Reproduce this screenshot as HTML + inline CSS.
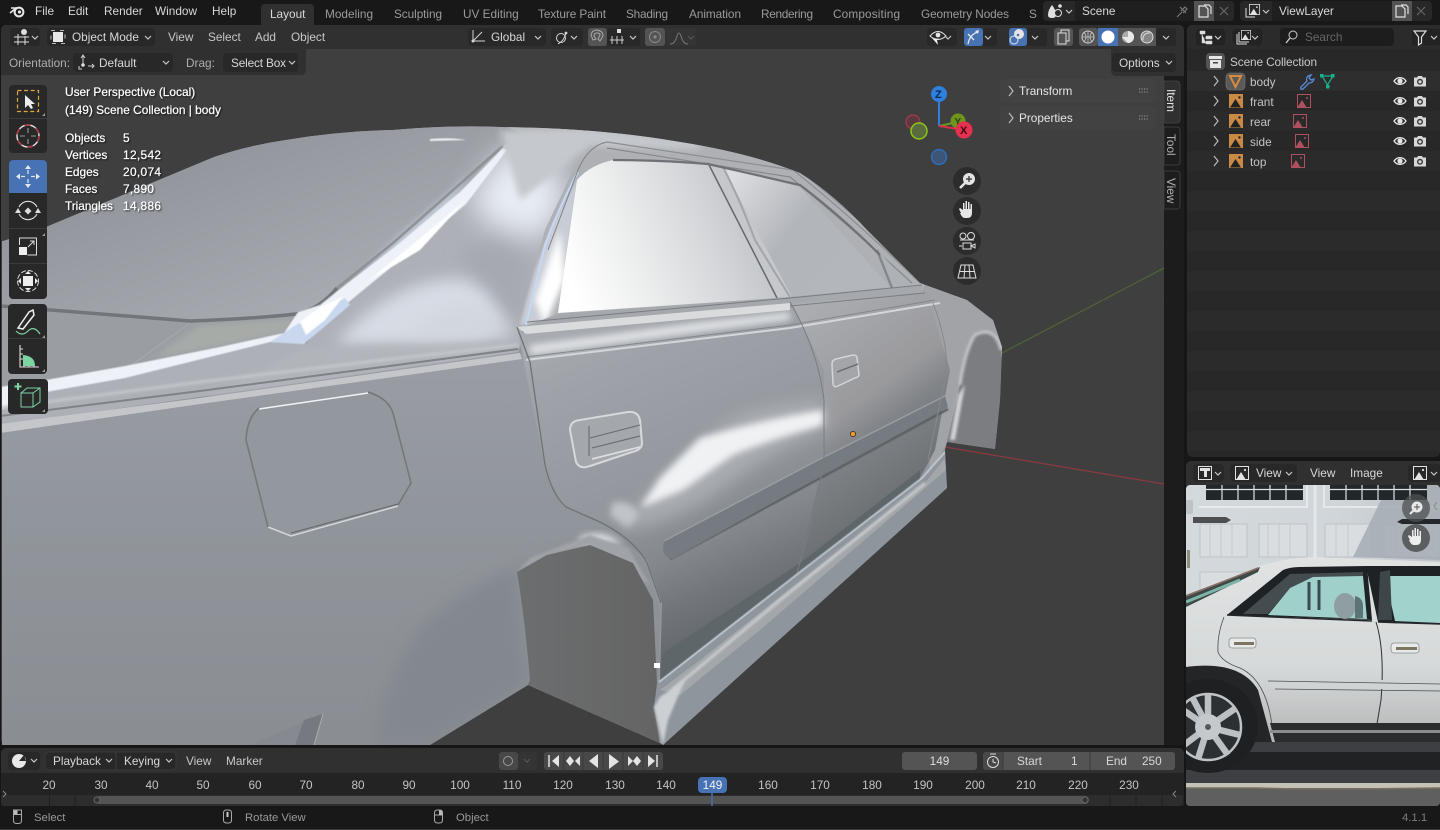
<!DOCTYPE html>
<html><head><meta charset="utf-8"><title>Blender</title>
<style>
html,body{margin:0;padding:0;background:#161616;width:1440px;height:830px;overflow:hidden}
svg{display:block;position:absolute;left:0;top:0}
text{font-family:"Liberation Sans",sans-serif;font-size:11.8px;fill:#c8c8c8}
.m{fill:#d8d8d8}
.w{fill:#9b9b9b}
.s{fill:#9a9a9a;font-size:11.3px}
.o{fill:#fff;stroke:#fff;stroke-width:.22px;font-size:11.9px;filter:drop-shadow(1px 1px .8px rgba(0,0,0,.65))}
.n{fill:#c4c4c4;text-anchor:middle;font-size:11.8px}
.ch{fill:none;stroke:#c8c8c8;stroke-width:1.2}
.seam{fill:none;stroke:#6f7277;stroke-width:1.3}
</style></head><body>
<svg width="1440" height="830" viewBox="0 0 1440 830" xmlns="http://www.w3.org/2000/svg">
<defs>
<filter id="b05" x="-20%" y="-20%" width="140%" height="140%"><feGaussianBlur stdDeviation=".6"/></filter>
<filter id="b1" x="-30%" y="-30%" width="160%" height="160%"><feGaussianBlur stdDeviation="1.2"/></filter>
<filter id="b3" x="-30%" y="-30%" width="160%" height="160%"><feGaussianBlur stdDeviation="3.500"/></filter>
<filter id="b8" x="-40%" y="-40%" width="180%" height="180%"><feGaussianBlur stdDeviation="8"/></filter>
<filter id="b16" x="-60%" y="-60%" width="220%" height="220%"><feGaussianBlur stdDeviation="14"/></filter>
<clipPath id="vp"><rect x="2" y="25" width="1162" height="720"/></clipPath>
<clipPath id="ph"><rect x="1186" y="485" width="254" height="321" rx="4"/></clipPath>
<clipPath id="car"><path d="M0 242L46 227L214 157Q250 145 286 140Q340 131 393 130Q450 125 500 127Q600 128 680 142Q750 153 800 173Q835 195 867 230L920 283L967 300L993 320L1002 347L1000 400L995 449L947 442L945 450L947 488L663 745L660 743L528 685L430 745H0Z"/></clipPath>
<linearGradient id="gup" x1="0" y1="0" x2="1" y2="1"><stop offset="0" stop-color="#878b93"/><stop offset=".5" stop-color="#9c9fa5"/><stop offset="1" stop-color="#b0b3b9"/></linearGradient>
<linearGradient id="glow" x1="0" y1="0" x2="0" y2="1"><stop offset="0" stop-color="#9a9da4"/><stop offset=".4" stop-color="#91969c"/><stop offset="1" stop-color="#8a8d92"/></linearGradient>
<linearGradient id="gd1" x1="0" y1="0" x2=".35" y2="1"><stop offset="0" stop-color="#aeb1b6"/><stop offset=".25" stop-color="#9fa3a9"/><stop offset=".6" stop-color="#93979d"/><stop offset=".76" stop-color="#84888d"/><stop offset=".88" stop-color="#72767b"/><stop offset="1" stop-color="#63686b"/></linearGradient>
<linearGradient id="gd2" x1="0" y1="0" x2=".4" y2="1"><stop offset="0" stop-color="#b0b2b6"/><stop offset=".5" stop-color="#99999c"/><stop offset=".62" stop-color="#808387"/><stop offset="1" stop-color="#62676a"/></linearGradient>
<linearGradient id="gw1" gradientUnits="userSpaceOnUse" x1="575" y1="295" x2="765" y2="225"><stop offset="0" stop-color="#ffffff"/><stop offset=".35" stop-color="#eceded"/><stop offset=".7" stop-color="#d5d7da"/><stop offset="1" stop-color="#bfc2c6"/></linearGradient>
<linearGradient id="gw2" gradientUnits="userSpaceOnUse" x1="735" y1="175" x2="860" y2="270"><stop offset="0" stop-color="#dcdde0"/><stop offset=".5" stop-color="#b2b5ba"/><stop offset="1" stop-color="#b3b6ba"/></linearGradient>
<linearGradient id="gar" x1="0" y1="0" x2="1" y2="0"><stop offset="0" stop-color="#6d6e6f"/><stop offset="1" stop-color="#646464"/></linearGradient>
<linearGradient id="gga" x1="0" y1="0" x2="1" y2="0"><stop offset="0" stop-color="#d4d9dc"/><stop offset=".6" stop-color="#d0d5d9"/><stop offset="1" stop-color="#c0c6cb"/></linearGradient>
<linearGradient id="gcar" x1="0" y1="0" x2="0" y2="1"><stop offset="0" stop-color="#e1e3e3"/><stop offset=".6" stop-color="#d6d9d9"/><stop offset="1" stop-color="#b4b6b6"/></linearGradient>
<symbol id="eye" viewBox="0 0 14 12" overflow="visible"><path d="M1 6C4 1.500 10 1.500 13 6C10 10.500 4 10.500 1 6Z" fill="none" stroke="#e4e4e4" stroke-width="1.300"/><circle cx="7" cy="6" r="2.600" fill="#e4e4e4"/></symbol>
<symbol id="cam" viewBox="0 0 14 12" overflow="visible"><path d="M1 2.500H4L5 1H9L10 2.500H13V11.500H1Z" fill="#d8d8d8"/><circle cx="7" cy="6.800" r="3" fill="#3a3a3a"/><circle cx="7" cy="6.800" r="1.600" fill="#d8d8d8"/></symbol>
<symbol id="img" viewBox="0 0 14 14" overflow="visible"><rect x="0" y="0" width="14" height="14" fill="#c98a45"/><path d="M1 13.500L6.500 5L12 13.500Z" fill="#222"/><circle cx="10.500" cy="3.500" r="1.200" fill="#222"/></symbol>
<symbol id="imgr" viewBox="0 0 14 14" overflow="visible"><rect x=".5" y=".5" width="13" height="13" fill="none" stroke="#b0505e"/><path d="M0 14L5 6L10 14Z" fill="#b0505e"/><circle cx="10" cy="4" r="1" fill="#b0505e"/></symbol>
<symbol id="imgw" viewBox="0 0 14 14" overflow="visible"><rect x=".5" y=".5" width="13" height="13" fill="none" stroke="#e2e2e2"/><path d="M1 14L6 6L11 14Z" fill="#e2e2e2"/><circle cx="10" cy="4" r="1.100" fill="#e2e2e2"/></symbol>
</defs>

<rect width="1440" height="830" fill="#161616"/>
<rect x="0" y="0" width="1440" height="25" fill="#181818"/>
<rect x="1" y="25" width="1183" height="720" rx="5" fill="#3f3f3f"/>

<!-- 3D scene -->
<g clip-path="url(#vp)">
<path d="M1002 353L1164 268" stroke="#4e6733" stroke-width="1.200"/>
<path d="M945 447L1164 484" stroke="#8c3a40" stroke-width="1.200"/>
<path d="M1000 300H1164M1000 245H1164M1000 200H1164" stroke="#434343" stroke-width="1" opacity=".6"/>

<g clip-path="url(#car)">
<rect x="0" y="120" width="1010" height="630" fill="#92969c"/>

<!-- upper panel -->
<path d="M0 240L46 225L214 155L286 138L393 128L503 125V143L393 243L337 288Q320 308 296 313Q250 318 190 320L0 306Z" fill="url(#gup)"/>
<path d="M430 139Q450 137 466 140L430 141Z" fill="#eef0f3" filter="url(#b05)"/>
<path d="M350 285L395 240L470 175L440 225L380 270L330 300Z" fill="#c2cad8" filter="url(#b3)"/>
<path d="M0 306L190 320Q250 318 296 313L286 333L125 370L0 392Z" fill="#9a9da2"/>
<path d="M200 325L296 318L286 333L150 360Z" fill="#a7aba8" filter="url(#b3)"/>

<!-- mid zone -->
<path d="M0 392L125 372L286 336L306 344L343 300L464 205L503 146L528 128L580 160L525 330L518 352L0 425Z" fill="#adb0b7"/>
<path d="M470 200L505 150L545 150L565 200L540 240L490 225Z" fill="#e8ecf4" filter="url(#b16)"/>
<path d="M460 250Q500 232 530 265L520 320L480 300Z" fill="#a6a9b1" filter="url(#b8)"/>
<path d="M335 345Q380 290 440 280Q490 270 505 330L480 345Z" fill="#dfe4ed" filter="url(#b8)" opacity=".85"/>
<path d="M400 340Q450 295 490 310L520 335L440 350Z" fill="#d0d4dc" filter="url(#b8)" opacity=".7"/>
<path d="M306 348L500 340L518 350L200 398Z" fill="#b3b6bc" filter="url(#b3)" opacity=".8"/>

<path d="M0 306L190 321Q250 319 296 314Q320 309 337 288" fill="none" stroke="#72757a" stroke-width="3.500"/>
<path d="M337 288L393 243L503 146" fill="none" stroke="#8f9296" stroke-width="2.500"/>
<path d="M125 370L190 323" fill="none" stroke="#a8abae" stroke-width="1"/>

<!-- white reflection -->
<g filter="url(#b05)">
<path d="M0 387L46 380L125 366L220 347L284 333L298 312L320 305L345 285L396 246L460 192L503 148L507 150L466 204L400 260L345 305L304 344L270 342L125 378L46 392L0 410Z" fill="#eef2f8"/>
<path d="M296 325L345 298L350 305L304 344L270 342Z" fill="#c9d8ef"/>
<path d="M300 322L322 306L343 297L325 320L306 335Z" fill="#ffffff"/>
<path d="M345 300L400 255L466 200L420 250L370 280Z" fill="#ffffff"/>
</g>

<!-- lower body -->
<path d="M0 428L518 352L530 360L548 470L566 508L600 522L645 560L660 610L658 690L660 745L528 685L430 745H0Z" fill="url(#glow)"/>
<path d="M0 424L200 398L520 353L522 359L200 404L0 433Z" fill="#c4c6ca"/>
<path d="M0 416L200 391L518 349" fill="none" stroke="#7f8287" stroke-width="2"/>
<path d="M0 408L200 382L400 358L518 345" fill="none" stroke="#c3c6cb" stroke-width="3" filter="url(#b1)"/>
<path d="M375 745Q390 660 428 620Q480 575 553 555L517 572L528 685L430 745Z" fill="#83888f" filter="url(#b8)"/>
<path d="M250 745L323 714L314 745Z" fill="#868a90"/>
<path d="M304 720L323 714L314 745H295Z" fill="#767a80"/>
<path d="M323 714L314 745" stroke="#a9acb0" stroke-width="1"/>

<!-- fuel door -->
<path d="M259 408L368 392Q388 398 393 413L411 483L398 505L291 535L268 527L246 440Q247 418 259 408Z" fill="#93989e"/>
<path d="M259 409L368 393" fill="none" stroke="#f0f3f7" stroke-width="1.600"/>
<path d="M368 392Q388 398 393 413L411 483L398 505" fill="none" stroke="#73767a" stroke-width="1.500"/>
<path d="M398 506L291 536L268 527" fill="none" stroke="#d4d7da" stroke-width="1.500"/>
<path d="M398 504L291 533" fill="none" stroke="#64676b" stroke-width="1"/>
<path d="M268 527L246 440Q247 418 259 408" fill="none" stroke="#75787c" stroke-width="1.600"/>

<!-- fender + inner arch -->
<path d="M920 283L967 300L993 320L1005 350L1000 360Q995 325 975 335Q965 350 960 385L947 442L930 475L925 300Z" fill="#a1a3a7"/>
<path d="M975 335Q995 325 1001 350L1002 400L995 452L947 442L960 385Q965 350 975 335Z" fill="#7c7d80"/>
<path d="M960 385Q965 350 975 335Q995 325 1001 350" fill="none" stroke="#c4c6c9" stroke-width="3" filter="url(#b1)"/>
<path d="M950 440L958 395L965 385L955 440Z" fill="#d0d2d5" filter="url(#b1)"/>

<!-- doors -->
<path d="M517 327L790 300L824 370L824 460L797 573L660 680L662 603L647 560L600 522L563 507L545 470Z" fill="url(#gd1)"/>
<path d="M790 300L925 285L950 370L935 450L920 478L800 565L797 573L824 460L824 370Z" fill="url(#gd2)"/>
<path d="M663 653L800 563L920 470L920 480L660 682Z" fill="#5f666a"/>

<!-- roof / pillar -->
<path d="M503 125L600 126L750 150L800 171L867 228L925 283L922 292L517 330L545 230L578 160Z" fill="#aeb0b4"/>
<path d="M500 130L590 128L700 142L700 150L590 146L560 170L520 200Z" fill="#c5c8cc" filter="url(#b3)"/>
<path d="M520 325L535 270L552 225L578 178L565 270L545 320Z" fill="#c8ccd4" filter="url(#b1)"/>
<path d="M535 300L560 230L565 280L545 325Z" fill="#ffffff" filter="url(#b3)"/>
<path d="M578 172Q560 205 545 245L526 325" fill="none" stroke="#c5d9f7" stroke-width="2"/>
<path d="M607 142Q588 146 578 170L548 250" fill="none" stroke="#7f8288" stroke-width="1"/>
<path d="M607 142L793 170Q850 215 920 283" fill="none" stroke="#8b8e92" stroke-width="1.200"/>
<path d="M607 148L790 177Q845 222 912 283" fill="none" stroke="#85888c" stroke-width="1.200"/>

<!-- windows -->
<path d="M613 160L708 163L777 298L558 313L577 180Q590 165 613 160Z" fill="url(#gw1)"/>
<path d="M723 167L800 187L890 287L792 297Z" fill="url(#gw2)"/>
<path d="M708 163L723 167L792 297L777 298Z" fill="#c5c7ca"/>
<path d="M708 163L777 298" stroke="#65686d" stroke-width="1.500"/>
<path d="M723 167Q740 200 755 240L790 297" fill="none" stroke="#a2a5a9" stroke-width="2"/>
<path d="M877 250L912 287L892 288Z" fill="#aeb1b5"/>
<path d="M877 250L892 288" stroke="#85888c" stroke-width="2.500"/>
<path d="M613 160Q660 160 708 164L800 185Q840 215 880 255" fill="none" stroke="#6e7175" stroke-width="2.200"/>

<!-- beltline -->
<path d="M558 314L777 298L890 288L922 285L922 292L790 304L520 328Z" fill="#a5a8ac"/>
<path d="M527 322L790 298L922 285M522 332L790 306L925 293" fill="none" stroke="#7a7d82" stroke-width="1"/>
<path d="M517 327L790 303L790 310L526 334Z" fill="#dadbdd"/>
<path d="M530 345L700 322L790 312L790 320L530 355Z" fill="#dfe1e4" filter="url(#b3)"/>
<path d="M526 360L790 328L940 303" fill="none" stroke="#d4d6d9" stroke-width="2"/>
<path d="M526 357L790 325L935 300" fill="none" stroke="#84878b" stroke-width="1"/>

<!-- door highlights -->
<path d="M620 530Q680 450 740 415Q790 400 825 400V430Q770 450 720 490Q670 525 620 530Z" fill="#b3b6ba" filter="url(#b8)" opacity=".7"/>
<path d="M640 508L660 478L700 438Q760 420 823 410L823 425Q770 440 733 455L683 490Z" fill="#f0f1f3" filter="url(#b3)"/>
<path d="M612 503Q630 498 640 515L628 528L610 516Z" fill="#c0c3c7" filter="url(#b3)"/>
<path d="M580 537Q605 527 622 545Q600 543 580 545Z" fill="#dadce0" filter="url(#b3)"/>

<!-- handles -->
<path d="M570 430Q570 421 580 420L628 412Q638 411 640 420L642 443Q642 450 632 452L590 466Q580 470 576 462Z" fill="#a4a7ac" stroke="#d6d8da" stroke-width="2"/>
<path d="M589 426V456M590 438L640 425M592 448L640 436" stroke="#696c70" stroke-width="1.100"/>
<path d="M592 459L640 447" stroke="#dcdde0" stroke-width="1.800"/>
<path d="M832 364Q832 360 836 359L853 355Q857 355 857 358L859 375Q859 377 855 378L838 386Q834 388 833 384Z" fill="#a3a5a9" stroke="#d2d4d6" stroke-width="1.500"/>
<path d="M837 372L858 364" stroke="#65686c" stroke-width="1.300"/>

<!-- rub strip -->
<path d="M670 559L824 476L948 409" fill="none" stroke="#5c6064" stroke-width="2.500" filter="url(#b05)"/>
<path d="M664 541L822 458L945 396L948 407L824 474L672 559Q665 558 663 550Z" fill="#767b81"/>
<path d="M664 541L822 458L945 396" fill="none" stroke="#989da3" stroke-width="1.500"/>

<!-- seams -->
<path d="M517 327L530 362L545 465Q552 495 566 507L600 522Q635 540 647 563L661 603" class="seam"/>
<path d="M790 302Q818 350 824 400V460L815 510L797 573" fill="none" stroke="#7a7d81" stroke-width="1"/>
<path d="M933 303Q947 340 947 370L940 403L928 460" fill="none" stroke="#85888c" stroke-width="1"/>

<!-- arch -->
<path d="M530 558L590 535L628 548L650 585L590 545L547 555L517 572Z" fill="#a0a3a7" filter="url(#b1)"/>
<path d="M517 572L547 555L590 545L633 563L653 600L657 683L654 707L660 745L528 685L530 680Q525 620 517 572Z" fill="url(#gar)"/>

<!-- skirt -->
<path d="M658 682L920 480L945 450L947 488L663 745L654 707Z" fill="#8e959c"/>
<path d="M660 690L700 660L925 483L945 458L946 470L760 630L680 695Z" fill="#a4a7aa"/>
<path d="M659 682L800 572L922 478L945 452" fill="none" stroke="#cbd3dc" stroke-width="1.600" filter="url(#b05)"/>
<path d="M672 690L780 600L925 483" fill="none" stroke="#d0d2d4" stroke-width="2.500" filter="url(#b1)"/>
<path d="M654 707L660 697L685 680L668 720L663 745Z" fill="#cdd0d3" filter="url(#b1)"/>
<path d="M654 663h6v5h-6z" fill="#fff"/>
</g>
<circle cx="853" cy="434" r="2.600" fill="#f29b2a" stroke="#222" stroke-width=".7"/>
</g>

<rect x="1164" y="76" width="20" height="669" fill="#1c1c1c"/>

<!-- viewport header -->
<path d="M1 30a5 5 0 0 1 5-5H1179a5 5 0 0 1 5 5V49H1Z" fill="#303030"/>
<path d="M1 49H306V70a5 5 0 0 1-5 5H1Z" fill="#303030"/>
<path d="M1111 49H1184V76H1116a5 5 0 0 1-5-5Z" fill="#303030"/>

<!-- top bar -->
<circle cx="19" cy="12" r="4.400" fill="none" stroke="#e8e8e8" stroke-width="2"/><circle cx="19.500" cy="12" r="1.600" fill="#e8e8e8"/>
<path d="M10 13L15 9M11 8H17" stroke="#e8e8e8" stroke-width="1.600" fill="none"/>
<text x="35" y="15" class="m">File</text><text x="68" y="15" class="m">Edit</text><text x="104" y="15" class="m">Render</text><text x="155" y="15" class="m">Window</text><text x="212" y="15" class="m">Help</text>
<path d="M261 8a4 4 0 0 1 4-4H310a4 4 0 0 1 4 4V25H261Z" fill="#303030"/>
<text x="270" y="18" class="m">Layout</text>
<text x="325" y="18" class="w" textLength="48">Modeling</text><text x="394" y="18" class="w" textLength="48">Sculpting</text><text x="463" y="18" class="w">UV Editing</text><text x="538" y="18" class="w" textLength="68">Texture Paint</text><text x="626" y="18" class="w" textLength="42">Shading</text><text x="689" y="18" class="w" textLength="52">Animation</text><text x="761" y="18" class="w" textLength="52">Rendering</text><text x="833" y="18" class="w" textLength="67">Compositing</text><text x="921" y="18" class="w" textLength="88">Geometry Nodes</text><text x="1029" y="18" class="w">S</text>
<!-- scene selector -->
<rect x="1043" y="1" width="191" height="20" rx="4" fill="#282828"/>
<rect x="1075" y="1" width="119" height="20" fill="#1f1f1f"/>
<rect x="1194" y="1" width="20" height="20" fill="#535353"/>
<path d="M1048 15q0-5 4-10q4 5 4 10q0 3-4 3t-4-3Z" fill="#e0e0e0"/><circle cx="1058" cy="13" r="3.500" fill="#282828" stroke="#e0e0e0"/><circle cx="1060" cy="6" r="1.800" fill="#e0e0e0"/>
<path class="ch" d="M1066 10l3 3l3-3"/>
<text x="1082" y="15" class="m">Scene</text>
<path d="M1177 17l5-5m-2-5l6 6m-5-2l4-4l2 2l-4 4" fill="none" stroke="#777" stroke-width="1.200"/>
<path d="M1199 6h6l3 3v8h-9ZM1204 5h5l2 2v7" fill="none" stroke="#e0e0e0" stroke-width="1.200"/>
<path d="M1220 7l8 8m0-8l-8 8" stroke="#666" stroke-width="1.200"/>
<rect x="1240" y="1" width="192" height="20" rx="4" fill="#282828"/>
<rect x="1272" y="1" width="120" height="20" fill="#1f1f1f"/>
<rect x="1392" y="1" width="20" height="20" fill="#535353"/>
<path d="M1246 8v9h9" fill="none" stroke="#e0e0e0"/><use href="#imgw" x="1249" y="4" width="11" height="11"/>
<path class="ch" d="M1263 10l3 3l3-3"/>
<text x="1279" y="15" class="m">ViewLayer</text>
<path d="M1396 6h6l3 3v8h-9ZM1401 5h5l2 2v7" fill="none" stroke="#e0e0e0" stroke-width="1.200"/>
<path d="M1417 7l8 8m0-8l-8 8" stroke="#666" stroke-width="1.200"/>

<!-- viewport header widgets -->
<rect x="10" y="28" width="30" height="18" rx="4" fill="#282828"/>
<circle cx="24" cy="32" r="3" fill="#ddd"/><path d="M14 37h15M14 42h15M18 34v11M25 36v9" stroke="#ddd" stroke-width="1" fill="none"/><path class="ch" d="M32 36l3 3l3-3"/>
<rect x="47" y="28" width="108" height="18" rx="4" fill="#282828"/>
<rect x="53" y="32" width="10" height="10" fill="#e8e8e8"/><path d="M51 30.500h14v13h-14z" fill="none" stroke="#bbb" stroke-dasharray="4 5"/>
<text x="72" y="41" class="m">Object Mode</text><path class="ch" d="M145 36l3 3l3-3"/>
<text x="168" y="41">View</text><text x="208" y="41">Select</text><text x="255" y="41">Add</text><text x="291" y="41">Object</text>

<rect x="468" y="28" width="78" height="18" rx="4" fill="#282828"/>
<path d="M473 30v11h12M473 41l9-9" stroke="#d4d4d4" fill="none"/><circle cx="473" cy="41" r="1.500" fill="#d4d4d4"/>
<text x="491" y="41" class="m">Global</text><path class="ch" d="M535 36l3 3l3-3"/>
<rect x="551" y="28" width="32" height="18" rx="4" fill="#282828"/>
<circle cx="561" cy="38" r="4.500" fill="none" stroke="#d4d4d4"/><path d="M558 44Q565 40 566 32" stroke="#d4d4d4" fill="none"/><circle cx="566" cy="33" r="1.400" fill="#d4d4d4"/><path class="ch" d="M571 36l3 3l3-3"/>
<rect x="588" y="28" width="19" height="18" rx="3" fill="#545454"/>
<rect x="607" y="28" width="33" height="18" rx="3" fill="#282828"/>
<path d="M593 40L591 35Q592 30 597 30Q603 31 603 36L600 41L598 39L600 35Q600 33 597 33Q594 33 594 36L596 39Z" fill="none" stroke="#aaa"/>
<rect x="617" y="29" width="4" height="4" fill="#ddd"/><path d="M610 40h14M612 36v8M617 36v8M622 36v8" stroke="#ccc" fill="none"/><path class="ch" d="M630 36l3 3l3-3"/>
<rect x="645" y="28" width="20" height="18" rx="3" fill="#545454"/>
<rect x="665" y="28" width="31" height="18" rx="3" fill="#343434"/>
<circle cx="655" cy="37" r="5.500" fill="none" stroke="#888"/><circle cx="655" cy="37" r="1.600" fill="#888"/>
<path d="M670 44Q675 44 677 36Q679 30 681 36Q683 44 688 44" stroke="#777" fill="none"/><path class="ch" style="stroke:#555" d="M688 36l3 3l3-3"/>

<rect x="927" y="28" width="30" height="18" rx="4" fill="#282828"/>
<path d="M930 36Q938 27 946 36Q938 43 930 36Z" fill="none" stroke="#e2e2e2"/><circle cx="938" cy="35" r="2.400" fill="#e2e2e2"/><path d="M932 38l6 7l-1-5l3-1Z" fill="#eee"/><path class="ch" d="M945 36l3 3l3-3"/>
<rect x="964" y="28" width="19" height="18" rx="3" fill="#4772b3"/><rect x="983" y="28" width="14" height="18" rx="3" fill="#282828"/>
<path d="M968 44Q970 34 978 32M968 34l6 6" stroke="#e8e8e8" fill="none" stroke-width="1.300"/><path d="M975 31l4-1l-1 4Z" fill="#e8e8e8"/><path class="ch" d="M985 36l3 3l3-3"/>
<rect x="1009" y="28" width="18" height="18" rx="3" fill="#4772b3"/><rect x="1027" y="28" width="20" height="18" rx="3" fill="#282828"/>
<circle cx="1019" cy="34" r="5" fill="#e4e4e4"/><circle cx="1014" cy="40" r="4" fill="none" stroke="#e4e4e4"/><circle cx="1018" cy="35" r="1.300" fill="#4772b3"/><path class="ch" d="M1032 36l3 3l3-3"/>
<rect x="1054" y="28" width="19" height="18" rx="3" fill="#545454"/>
<path d="M1061 33v-3h8v11h-3M1058 33h8v11h-8Z" fill="none" stroke="#ddd"/>
<rect x="1079" y="28" width="19" height="18" rx="3" fill="#545454"/><rect x="1098" y="28" width="20" height="18" fill="#4772b3"/><rect x="1118" y="28" width="19" height="18" fill="#545454"/><rect x="1137" y="28" width="19" height="18" fill="#545454"/><rect x="1156" y="28" width="20" height="18" rx="3" fill="#282828"/>
<circle cx="1088" cy="37" r="6" fill="none" stroke="#ccc"/><path d="M1082 37h12M1088 31v12M1084 32q4 5 0 10M1092 32q-4 5 0 10" stroke="#ccc" fill="none" stroke-width=".7"/>
<circle cx="1108" cy="37" r="6.500" fill="#fff"/>
<circle cx="1128" cy="37" r="6" fill="#aaa"/><path d="M1128 31a6 6 0 0 1 0 12L1122 37H1128Z" fill="#e8e8e8"/>
<circle cx="1147" cy="37" r="6" fill="#888" stroke="#ddd"/><path d="M1143 40a6 6 0 0 1 7-7" stroke="#ddd" fill="none"/>
<path class="ch" d="M1163 36l3 3l3-3"/>

<!-- tool settings row -->
<text x="9" y="67" style="fill:#aeaeae">Orientation:</text>
<rect x="73" y="53" width="100" height="19" rx="4" fill="#282828"/>
<path d="M83 56v8M81 58l2-3l2 3M88 66h6M92 64l2 2l-2 2M79 66v3h3" stroke="#ccc" fill="none"/><circle cx="83" cy="65" r="1.800" fill="#ddd"/>
<text x="99" y="67" class="m">Default</text><path class="ch" d="M163 61l3 3l3-3"/>
<text x="186" y="67" style="fill:#aeaeae">Drag:</text>
<rect x="223" y="53" width="75" height="19" rx="4" fill="#282828"/>
<text x="231" y="67" class="m" textLength="55">Select Box</text><path class="ch" d="M289 61l3 3l3-3"/>
<rect x="1112" y="53" width="64" height="19" rx="4" fill="#282828"/>
<text x="1119" y="67" class="m">Options</text><path class="ch" d="M1166 61l3 3l3-3"/>

<!-- stats overlay -->
<text x="65" y="96" class="o">User Perspective (Local)</text>
<text x="65" y="114" class="o" textLength="156">(149) Scene Collection | body</text>
<text x="65" y="142" class="o">Objects</text><text x="123" y="142" class="o">5</text>
<text x="65" y="159" class="o">Vertices</text><text x="123" y="159" class="o" textLength="38">12,542</text>
<text x="65" y="176" class="o">Edges</text><text x="123" y="176" class="o" textLength="38">20,074</text>
<text x="65" y="193" class="o">Faces</text><text x="123" y="193" class="o" textLength="31">7,890</text>
<text x="65" y="210" class="o" textLength="48">Triangles</text><text x="123" y="210" class="o" textLength="38">14,886</text>

<!-- toolbar -->
<rect x="9" y="85" width="38" height="68" rx="4" fill="#282828"/>
<rect x="9" y="160" width="38" height="139" rx="4" fill="#282828"/>
<rect x="8" y="304" width="39" height="70" rx="4" fill="#282828"/>
<rect x="8" y="379" width="40" height="35" rx="4" fill="#282828"/>
<path d="M9 118.500H47M9 228.500H47M9 263.500H47M8 338.500H47" stroke="#3b3b3b"/>
<path d="M9 193v-29a4 4 0 0 1 4-4h30a4 4 0 0 1 4 4v29Z" fill="#4772b3"/>
<rect x="17.500" y="90.500" width="21" height="21" fill="none" stroke="#e0a845" stroke-width="1.200" stroke-dasharray="4 2.600"/>
<path d="M25 95V108L28 105L31 109L33 108L31 104H35Z" fill="#ececec"/>
<circle cx="28" cy="136" r="11" fill="none" stroke="#e2e2e2" stroke-width="1.400"/>
<circle cx="28" cy="136" r="11" fill="none" stroke="#b0343c" stroke-width="1.400" stroke-dasharray="6 6"/>
<path d="M28 128v5M28 139v5M20 136h5M31 136h5" stroke="#999" stroke-width="1.100"/>
<path d="M28 165l3 4h-6ZM28 188l3-4h-6ZM16 176.500l4-3v6ZM40 176.500l-4-3v6Z" fill="#e8e8e8"/>
<path d="M28 170v4M28 179v4M21 176.500h4M31 176.500h4" stroke="#d8e0ee" stroke-width="1.300"/>
<path d="M19 207a10 10 0 0 1 18 0M37 214a10 10 0 0 1-18 0" fill="none" stroke="#ddd" stroke-width="1.100"/>
<path d="M28 207.500l3.500 3.500l-3.500 3.500l-3.500-3.500ZM18 208l3 5h-6ZM38 208l3 5h-6Z" fill="#ddd"/>
<rect x="19" y="247" width="8" height="8" fill="#eee"/><path d="M19.500 245v-7h17v17h-9" fill="none" stroke="#ddd"/>
<path d="M28 247l6-6M30 241h4v4" stroke="#ddd" fill="none"/>
<circle cx="28" cy="281" r="10.500" fill="none" stroke="#ddd" stroke-dasharray="5 2"/>
<rect x="23" y="276" width="10" height="10" fill="#eee"/>
<path d="M28 271l3 3h-6ZM28 291l3-3h-6ZM18 281l3-3v6ZM38 281l-3-3v6Z" fill="#eee"/>
<path d="M18 328L29 312L33 310L34 315L23 329Z" fill="#282828" stroke="#eee" stroke-width="1.500"/>
<path d="M16 331Q22 337 28 331Q34 325 40 334" fill="none" stroke="#7ed3a2" stroke-width="1.200"/>
<path d="M20 345V367H39M20 349h3M20 354h3M20 359h3M24 367v-3M29 367v-3M34 367v-3" stroke="#ddd" stroke-width="1.100" fill="none"/>
<path d="M23 355Q35 356 35 366H23Z" fill="#7ed3a2"/>
<path d="M21 393h12v14h-12ZM21 393l6-5h13v14l-7 5M33 393l7-5" fill="none" stroke="#7ed3a2" stroke-width="1"/>
<path d="M18 383v7M14.500 386.500h7" stroke="#7ed3a2" stroke-width="2"/>
<path d="M45 113v3h-3ZM45 233v3h-3ZM45 335v3h-3ZM45 369v3h-3ZM45 409v3h-3Z" fill="#999"/>

<!-- gizmo -->
<path d="M939 126V100" stroke="#2f7fdc" stroke-width="2"/>
<path d="M939 126L958 122" stroke="#6e961c" stroke-width="2"/>
<path d="M939 126L964 130" stroke="#d9304c" stroke-width="2"/>
<circle cx="913" cy="122" r="7" fill="#5a3a40" stroke="#a23a48" stroke-width="1.300"/>
<circle cx="958" cy="121" r="7.500" fill="#6e961c"/><text x="954.500" y="125" style="font-size:10px;fill:#2f3f10;font-weight:bold">Y</text>
<circle cx="919" cy="131" r="8" fill="#5a6b3e" stroke="#8cc814" stroke-width="1.500"/>
<circle cx="964" cy="130" r="8.500" fill="#e6304f"/><text x="960" y="134" style="font-size:11px;fill:#3a0c12;font-weight:bold">X</text>
<circle cx="939" cy="94" r="8" fill="#2f7fdc"/><text x="935" y="98" style="font-size:11px;fill:#0e2a50;font-weight:bold">Z</text>
<circle cx="939" cy="157" r="7.500" fill="#3d5678" stroke="#2a70c8" stroke-width="1.300"/>

<!-- nav buttons -->
<circle cx="967" cy="181" r="14" fill="#2c2c2c"/><circle cx="967" cy="211" r="14" fill="#2c2c2c"/><circle cx="967" cy="241" r="14" fill="#2c2c2c"/><circle cx="967" cy="271" r="14" fill="#2c2c2c"/>
<circle cx="969" cy="179" r="6" fill="#e4e4e4"/><path d="M966 179h6M969 176v6" stroke="#2c2c2c" stroke-width="1.200"/><path d="M960 188l5-5" stroke="#e4e4e4" stroke-width="2.500"/>
<path d="M961 213l-2-4l1-1l3 2v-7h1.500v6h1v-8h1.500v8h1v-7h1.500v7h1v-5h1.500v9q0 5-5 5h-2q-3 0-5-5Z" fill="#e6e6e6"/>
<circle cx="963" cy="236" r="3" fill="none" stroke="#ddd"/><circle cx="971" cy="236" r="3.500" fill="none" stroke="#ddd"/><path d="M960 240h14M963 243h8v6h-8ZM971 246l4-2v4ZM959 246h3" fill="none" stroke="#ddd"/>
<path d="M961 265h12l3 13h-18ZM959.500 271.500h15M965 265l-1 13M969 265l1 13" fill="none" stroke="#ddd"/>

<!-- N panels -->
<rect x="1000" y="79" width="156" height="24" rx="4" fill="#424242"/>
<rect x="1000" y="106" width="156" height="24" rx="4" fill="#424242"/>
<path d="M1009 86l4 5l-4 5M1009 113l4 5l-4 5" fill="none" stroke="#bbb" stroke-width="1.200"/>
<text x="1019" y="95" style="fill:#e6e6e6">Transform</text><text x="1019" y="122" style="fill:#e6e6e6">Properties</text>
<path d="M1139 89h10M1139 92h10M1139 116h10M1139 119h10" stroke="#9a9a9a" stroke-dasharray="1.200 1.300"/>
<!-- tabs -->
<path d="M1164 81h13a3 3 0 0 1 3 3v36a3 3 0 0 1-3 3h-13Z" fill="#303030" stroke="#444" stroke-width=".8"/>
<path d="M1164 127h13a3 3 0 0 1 3 3v32a3 3 0 0 1-3 3h-13ZM1164 171h13a3 3 0 0 1 3 3v32a3 3 0 0 1-3 3h-13Z" fill="#1d1d1d" stroke="#444" stroke-width=".8"/>
<text transform="translate(1167 89) rotate(90)" style="fill:#e4e4e4">Item</text>
<text transform="translate(1167 134) rotate(90)" style="fill:#b0b0b0">Tool</text>
<text transform="translate(1167 178) rotate(90)" style="fill:#b0b0b0">View</text>

<!-- outliner -->
<rect x="1187" y="25" width="253" height="432" rx="5" fill="#282828"/>
<path d="M1187 30a5 5 0 0 1 5-5H1440V49H1187Z" fill="#2b2b2b"/>
<g fill="#2b2b2b">
<rect x="1187" y="71" width="253" height="20" fill="#2e2e2e"/><rect x="1187" y="111" width="253" height="20"/><rect x="1187" y="151" width="253" height="20"/><rect x="1187" y="191" width="253" height="20"/><rect x="1187" y="231" width="253" height="20"/><rect x="1187" y="271" width="253" height="20"/><rect x="1187" y="311" width="253" height="20"/><rect x="1187" y="351" width="253" height="20"/><rect x="1187" y="391" width="253" height="20"/><rect x="1187" y="431" width="253" height="20"/>
</g>
<rect x="1195" y="28" width="31" height="18" rx="4" fill="#232323" stroke="#353535" stroke-width=".6"/>
<path d="M1200 31h5v3h-5ZM1202 34v9h4M1202 38h4M1206 36h6v3h-6ZM1206 41h6v3h-6Z" fill="#ddd" stroke="#ddd" stroke-width=".5"/><path class="ch" d="M1215 36l3 3l3-3"/>
<rect x="1232" y="28" width="31" height="18" rx="4" fill="#232323" stroke="#353535" stroke-width=".6"/>
<path d="M1237 34v10h10M1239 32v10h10" fill="none" stroke="#ddd"/><use href="#imgw" x="1241" y="30" width="10" height="10"/><path class="ch" d="M1252 36l3 3l3-3"/>
<rect x="1280" y="28" width="114" height="18" rx="4" fill="#1d1d1d"/>
<circle cx="1293" cy="35" r="4" fill="none" stroke="#ccc"/><path d="M1290 38l-4 5" stroke="#ccc" stroke-width="1.400"/>
<text x="1305" y="41" style="fill:#666">Search</text>
<rect x="1411" y="28" width="30" height="18" rx="4" fill="#232323" stroke="#353535" stroke-width=".6"/>
<path d="M1414 31h12l-4.500 6v6l-3 2v-8Z" fill="none" stroke="#ddd" stroke-width="1.200"/><path class="ch" d="M1431 36l3 3l3-3"/>

<rect x="1206" y="53" width="19" height="17" rx="4" fill="#545454"/>
<path d="M1209 56h13v3h-13ZM1210 60h11v8h-11Z" fill="#e6e6e6"/><rect x="1213" y="62" width="5" height="1.500" fill="#444"/>
<text x="1230" y="66" style="fill:#c8c8c8" textLength="87">Scene Collection</text>
<rect x="1226" y="73" width="19" height="17" rx="4" fill="#5a5a5a" stroke="#777" stroke-width=".6"/>
<path d="M1230 76h11l-5.500 11Z" fill="none" stroke="#d98a3a" stroke-width="2"/>
<g fill="none" stroke="#bbb" stroke-width="1.200"><path d="M1214 76l4 5l-4 5M1214 96l4 5l-4 5M1214 116l4 5l-4 5M1214 136l4 5l-4 5M1214 156l4 5l-4 5"/></g>
<text x="1250" y="86" style="fill:#c4c4c4">body</text><text x="1250" y="106" style="fill:#c4c4c4">frant</text><text x="1250" y="126" style="fill:#c4c4c4">rear</text><text x="1250" y="146" style="fill:#c4c4c4">side</text><text x="1250" y="166" style="fill:#c4c4c4">top</text>
<path d="M1301 87l6-6a4 4 0 0 1 1-5l3-1l-2 3l2 2l3-1q-1 4-5 4l-6 6q-3 1-2-2Z" fill="none" stroke="#5b8ad8" stroke-width="1.300"/>
<path d="M1322 76h11l-5.500 9Z" fill="none" stroke="#17b28a" stroke-width="1.200"/>
<rect x="1320" y="74" width="3.500" height="3.500" fill="#17b28a"/><rect x="1331" y="74" width="3.500" height="3.500" fill="#17b28a"/><rect x="1326" y="85" width="3.500" height="3.500" fill="#17b28a"/>
<use href="#img" x="1229" y="94" width="14" height="14"/><use href="#img" x="1229" y="114" width="14" height="14"/><use href="#img" x="1229" y="134" width="14" height="14"/><use href="#img" x="1229" y="154" width="14" height="14"/>
<use href="#imgr" x="1297" y="94" width="14" height="14"/><use href="#imgr" x="1293" y="114" width="14" height="14"/><use href="#imgr" x="1295" y="134" width="14" height="14"/><use href="#imgr" x="1291" y="154" width="14" height="14"/>
<use href="#eye" x="1393" y="75" width="14" height="12"/><use href="#eye" x="1393" y="95" width="14" height="12"/><use href="#eye" x="1393" y="115" width="14" height="12"/><use href="#eye" x="1393" y="135" width="14" height="12"/><use href="#eye" x="1393" y="155" width="14" height="12"/>
<use href="#cam" x="1413" y="75" width="14" height="12"/><use href="#cam" x="1413" y="95" width="14" height="12"/><use href="#cam" x="1413" y="115" width="14" height="12"/><use href="#cam" x="1413" y="135" width="14" height="12"/><use href="#cam" x="1413" y="155" width="14" height="12"/>

<!-- image editor -->
<path d="M1186 466a5 5 0 0 1 5-5H1440V486H1186Z" fill="#303030"/>
<rect x="1193" y="464" width="31" height="18" rx="4" fill="#282828"/>
<path d="M1198.500 466.500h13v13h-13Z" fill="none" stroke="#e2e2e2"/><path d="M1200 468h10v3h-3v6h-3v-6h-4Z" fill="#e2e2e2"/><path class="ch" d="M1215 472l3 3l3-3"/>
<rect x="1230" y="464" width="67" height="18" rx="4" fill="#282828"/>
<use href="#imgw" x="1235" y="466" width="14" height="14"/>
<text x="1256" y="477" class="m">View</text><path class="ch" d="M1286 472l3 3l3-3"/>
<text x="1310" y="477" class="m">View</text><text x="1350" y="477" class="m">Image</text>
<rect x="1408" y="464" width="33" height="18" rx="4" fill="#282828"/>
<use href="#imgw" x="1413" y="466" width="14" height="14"/><path class="ch" d="M1431 472l3 3l3-3"/>

<!-- photo -->
<g clip-path="url(#ph)">
<rect x="1186" y="485" width="254" height="321" fill="url(#gga)"/>
<path d="M1199 507H1307V485M1324 485V507H1440" fill="none" stroke="#eceff1" stroke-width="1.500"/>
<path d="M1315 485V560" stroke="#e4e7e9" stroke-width="3"/>
<g fill="#d9dde0" stroke="#b9bec3" stroke-width=".8">
<rect x="1200" y="524" width="47" height="33"/><rect x="1259" y="524" width="48" height="33"/><rect x="1325" y="524" width="47" height="33"/><rect x="1384" y="524" width="56" height="33"/>
<rect x="1200" y="572" width="48" height="32"/>
</g>
<path d="M1210 524v33M1221 524v33M1232 524v33M1268 524v33M1279 524v33M1290 524v33M1336 524v33M1348 524v33M1396 524v33M1410 524v33M1424 524v33" stroke="#bcc1c6" stroke-width=".7"/>
<path d="M1353 557L1380 502L1393 485H1440V560Z" fill="#a4abb3" opacity=".85"/>
<rect x="1206" y="485" width="97" height="15" fill="#22282a"/><rect x="1330" y="485" width="97" height="15" fill="#22282a"/>
<path d="M1206 489.500H1303M1330 489.500H1427M1222 485v15M1238 485v15M1254 485v15M1270 485v15M1286 485v15M1346 485v15M1362 485v15M1378 485v15M1394 485v15M1410 485v15" stroke="#dfe3e5" stroke-width="1.200"/>
<path d="M1193 517h33l5 3l-5 3h-33Z" fill="#4c4e50"/>
<path d="M1397 522l5-3h38v5h-38Z" fill="#25282a"/>
<rect x="1187" y="550" width="3" height="18" fill="#8e8e80"/>
<path d="M1186 607L1260 566Q1285 558 1313 557L1440 562V742H1186Z" fill="url(#gcar)"/>
<path d="M1186 595L1260 567L1258 572L1186 607Z" fill="#3f4a48"/><path d="M1186 596L1258 568" stroke="#8c6f66" stroke-width="1.500"/>
<path d="M1186 602L1240 580" stroke="#7fb5a8" stroke-width="3"/>
<path d="M1227 615L1283 570Q1290 567 1300 567L1367 566L1372 620L1290 617Z" fill="#1e2225"/>
<path d="M1243 614L1290 574L1363 572L1363 578L1313 578L1290 588L1268 614Z" fill="#444c50"/>
<path d="M1268 615L1290 588L1313 577L1363 576L1367 619Z" fill="#9fd0ca"/>
<path d="M1366 566L1440 566V624L1378 622Z" fill="#1e2225"/>
<path d="M1385 576L1440 576V623L1395 621Z" fill="#a2d2cc"/>
<path d="M1380 572L1390 570L1392 620L1378 620Z" fill="#3e464a"/>
<path d="M1309 582v28M1319 580v30" stroke="#3b4a50" stroke-width="3"/>
<ellipse cx="1345" cy="606" rx="11" ry="13" fill="#8f9ea2"/><path d="M1355 596q8 2 8 10v12h-8Z" fill="#5d7476"/>
<path d="M1227 615L1372 621" stroke="#24282b" stroke-width="1.600"/><path d="M1378 622L1440 624" stroke="#24282b" stroke-width="1.600"/>
<path d="M1224 617Q1217 635 1218 652Q1222 662 1240 668Q1266 680 1272 725" fill="none" stroke="#4a4d4e" stroke-width=".8"/>
<path d="M1376 622Q1385 650 1381 700L1376 730" fill="none" stroke="#2e3132" stroke-width="1"/>
<rect x="1229" y="638" width="27" height="10" rx="3" fill="#e8e9e9" stroke="#8a8c8c" stroke-width=".8"/><rect x="1234" y="642" width="20" height="3" fill="#7d7461"/>
<rect x="1391" y="643" width="28" height="10" rx="3" fill="#e8e9e9" stroke="#8a8c8c" stroke-width=".8"/><rect x="1396" y="647" width="21" height="3" fill="#7d7461"/>
<path d="M1265 682L1270 680H1440V689H1275Z" fill="#d0d3d3"/><path d="M1268 681L1440 684M1275 689L1440 691" stroke="#4d5051" stroke-width=".8"/>
<path d="M1270 723H1440V742H1275Z" fill="#2a2c2e"/><rect x="1270" y="730" width="170" height="3" fill="#8a8d90"/>
<path d="M1186 667Q1240 660 1258 690L1272 742H1186Z" fill="#232526"/>
<rect x="1186" y="742" width="254" height="64" fill="#3d3f42"/>
<rect x="1186" y="752" width="254" height="18" fill="#202224"/>
<rect x="1186" y="785" width="254" height="21" fill="#5f5f60"/>
<rect x="1186" y="783" width="254" height="5" fill="#c4c1b6"/>
<path d="M1186 788h70l40 1h60l84-1" stroke="#77705e" stroke-width="1.500" fill="none"/>
<ellipse cx="1208" cy="726" rx="50" ry="47" fill="#1f2021"/>
<circle cx="1208" cy="727" r="33" fill="#2c3032" stroke="#c0c3c5" stroke-width="2.500"/>
<path d="M1208 727L1208 695M1208 727L1236 708M1208 727L1240 735M1208 727L1228 755M1208 727L1198 759M1208 727L1180 748M1208 727L1180 708M1208 727L1192 697" stroke="#bcc0c2" stroke-width="6.500"/>
<circle cx="1208" cy="727" r="13" fill="#c6c9cb"/><circle cx="1208" cy="727" r="3" fill="#555a60"/>
</g>
<circle cx="1416" cy="508" r="14" fill="#4e5050" opacity=".75"/><circle cx="1416" cy="538" r="14" fill="#4e5050" opacity=".85"/>
<circle cx="1417" cy="507" r="5.500" fill="#e8e8e8"/><path d="M1414 507h6M1417 504v6" stroke="#555"/><path d="M1410 514l4-4" stroke="#e8e8e8" stroke-width="2.200"/>
<path d="M1410 540l-2-4l1-1l3 2v-7h1.500v6h1v-8h1.500v8h1v-7h1.500v7h1v-5h1.500v9q0 5-5 5h-2q-3 0-5-5Z" fill="#eee"/>
<rect x="1186" y="500" width="7" height="14" rx="2" fill="#b4b8bc" opacity=".7"/>
<path d="M1437 502l-3 4l3 4" fill="none" stroke="#8a8a8a"/>

<!-- timeline -->
<path d="M1 753a5 5 0 0 1 5-5H1179a5 5 0 0 1 5 5V806H1Z" fill="#303030"/>
<rect x="1" y="773" width="1183" height="33" fill="#232323"/>
<path d="M1 795H1183V802a4 4 0 0 1-4 4H5a4 4 0 0 1-4-4Z" fill="#2d2d2d"/>
<path d="M49.500 795v11M75 795v11M1110 795v11M1136 795v11M1162 795v11" stroke="#1f1f1f"/>
<rect x="8" y="752" width="32" height="18" rx="4" fill="#282828"/>
<circle cx="19" cy="761" r="7" fill="#e8e8e8"/><path d="M19 761L24 755L26 761Z" fill="#282828"/><path class="ch" d="M31 759l3 3l3-3"/>
<rect x="45" y="752" width="131" height="18" rx="4" fill="#282828" stroke="#3c3c3c" stroke-width=".8"/><path d="M116 752v18" stroke="#3c3c3c"/>
<text x="53" y="765" class="m">Playback</text><path class="ch" d="M106 759l3 3l3-3"/>
<text x="124" y="765" class="m">Keying</text><path class="ch" d="M166 759l3 3l3-3"/>
<text x="186" y="765">View</text><text x="226" y="765">Marker</text>
<rect x="499" y="752" width="19" height="18" rx="3" fill="#484848"/><rect x="518" y="752" width="19" height="18" rx="3" fill="#343434"/>
<circle cx="508" cy="761" r="4.500" fill="none" stroke="#999"/><path class="ch" style="stroke:#555" d="M524 759l3 3l3-3"/>
<rect x="544" y="752" width="119" height="18" rx="3" fill="#484848"/>
<path d="M564 752v18M583 752v18M603 752v18M623 752v18M643 752v18" stroke="#3a3a3a"/>
<path d="M549 755v12" stroke="#e4e4e4" stroke-width="1.500"/><path d="M559 755v12l-7-6Z" fill="#e4e4e4"/>
<path d="M570 756l-4 5l4 5l4-5ZM580 756v10l-5-5Z" fill="#e4e4e4"/>
<path d="M598 754v14l-9-7Z" fill="#e4e4e4"/>
<path d="M609 754v15l10-7.500Z" fill="#e4e4e4"/>
<path d="M628 756v10l5-5ZM637 756l-4 5l4 5l4-5Z" fill="#e4e4e4"/>
<path d="M648 755v12l7-6Z" fill="#e4e4e4"/><path d="M657 755v12" stroke="#e4e4e4" stroke-width="1.500"/>
<rect x="902" y="752" width="75" height="18" rx="3" fill="#545454"/>
<text x="939.500" y="765" class="n" style="fill:#dedede">149</text>
<rect x="983" y="752" width="192" height="18" rx="3" fill="#545454"/>
<rect x="983" y="752" width="20" height="18" rx="3" fill="#484848"/>
<path d="M1003 752v18M1090 752v18" stroke="#3a3a3a"/>
<circle cx="993" cy="762" r="5.500" fill="none" stroke="#ddd"/><path d="M990 754h6M993 759v3l3 1" stroke="#ddd" fill="none"/>
<text x="1017" y="765" class="m">Start</text><text x="1071" y="765" class="m">1</text>
<text x="1106" y="765" class="m">End</text><text x="1142" y="765" class="m">250</text>
<text x="49" y="789" class="n">20</text><text x="101" y="789" class="n">30</text><text x="152" y="789" class="n">40</text><text x="203" y="789" class="n">50</text><text x="255" y="789" class="n">60</text><text x="306" y="789" class="n">70</text><text x="358" y="789" class="n">80</text><text x="409" y="789" class="n">90</text><text x="460" y="789" class="n">100</text><text x="512" y="789" class="n">110</text><text x="563" y="789" class="n">120</text><text x="615" y="789" class="n">130</text><text x="666" y="789" class="n">140</text><text x="768" y="789" class="n">160</text><text x="820" y="789" class="n">170</text><text x="872" y="789" class="n">180</text><text x="923" y="789" class="n">190</text><text x="975" y="789" class="n">200</text><text x="1026" y="789" class="n">210</text><text x="1078" y="789" class="n">220</text><text x="1129" y="789" class="n">230</text>
<rect x="96" y="796" width="993" height="8" rx="4" fill="#545454"/>
<circle cx="97" cy="800" r="3" fill="#333" stroke="#666"/><circle cx="1085" cy="800" r="3" fill="#333" stroke="#666"/>
<path d="M712 793v13" stroke="#4772b3" stroke-width="1.500"/>
<rect x="698" y="777" width="29" height="16" rx="4" fill="#4772b3"/>
<text x="712.500" y="789" class="n" style="fill:#f2f2f2">149</text>
<path d="M3 791l3 3l-3 3M1176 791l-3 3l3 3" fill="none" stroke="#888"/>

<!-- status bar -->
<rect x="0" y="806" width="1440" height="24" fill="#181818"/>
<rect x="0" y="829" width="1440" height="1" fill="#3a3a3a"/>
<path d="M13.500 810h8v4.500h-8ZM13.500 814.500v6q0 3 3 3h2q3 0 3-3v-6" fill="none" stroke="#aaa"/><rect x="14" y="810.500" width="3.500" height="4" fill="#bbb"/>
<path d="M223.500 813q0-3 3-3h2q3 0 3 3v7q0 3-3 3h-2q-3 0-3-3Z" fill="none" stroke="#aaa"/><rect x="226.500" y="812" width="2" height="5" fill="#ccc"/>
<path d="M434.500 813q0-3 3-3h2q3 0 3 3v7q0 3-3 3h-2q-3 0-3-3ZM434.500 815h8" fill="none" stroke="#aaa"/><rect x="439" y="810.500" width="3.500" height="4.500" fill="#bbb"/>
<text x="34" y="821" class="s">Select</text><text x="245" y="821" class="s">Rotate View</text><text x="456" y="821" class="s">Object</text>
<text x="1402" y="821" class="s" style="fill:#7e7e7e">4.1.1</text>
</svg>
</body></html>
